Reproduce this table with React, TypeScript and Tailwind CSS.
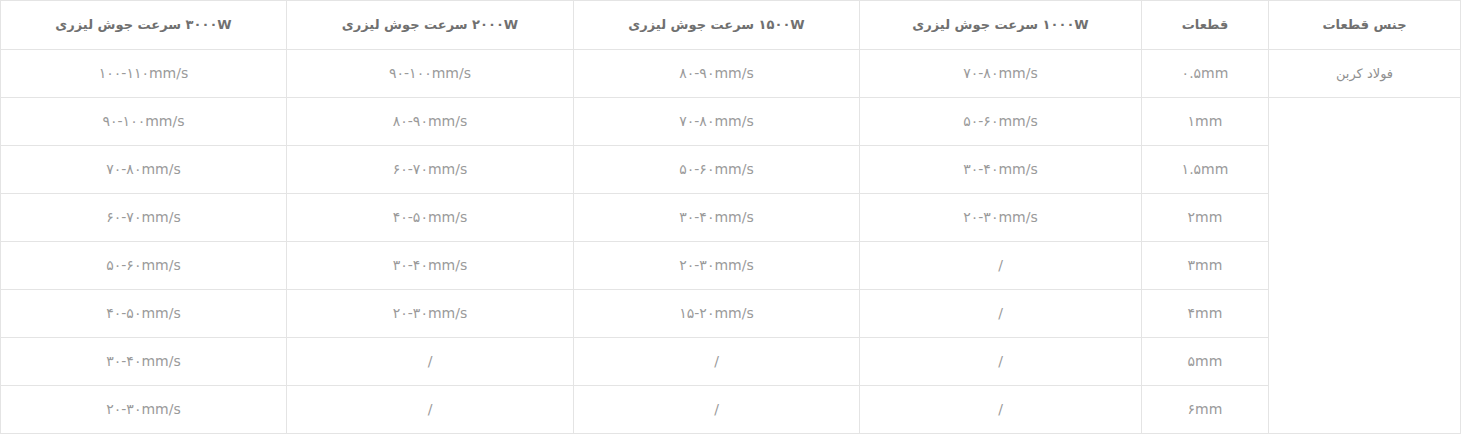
const headers = [
  "جنس قطعات",
  "قطعات",
  "۱۰۰۰W سرعت جوش لیزری",
  "۱۵۰۰W سرعت جوش لیزری",
  "۲۰۰۰W سرعت جوش لیزری",
  "۳۰۰۰W سرعت جوش لیزری",
]

const widths = ["w-[192px]", "w-[127px]", "w-[282px]", "w-[286px]", "w-[287px]", "w-[286px]"]

const rows: string[][] = [
  ["۰.۵mm", "۷۰-۸۰mm/s", "۸۰-۹۰mm/s", "۹۰-۱۰۰mm/s", "۱۰۰-۱۱۰mm/s"],
  ["۱mm", "۵۰-۶۰mm/s", "۷۰-۸۰mm/s", "۸۰-۹۰mm/s", "۹۰-۱۰۰mm/s"],
  ["۱.۵mm", "۳۰-۴۰mm/s", "۵۰-۶۰mm/s", "۶۰-۷۰mm/s", "۷۰-۸۰mm/s"],
  ["۲mm", "۲۰-۳۰mm/s", "۳۰-۴۰mm/s", "۴۰-۵۰mm/s", "۶۰-۷۰mm/s"],
  ["۳mm", "/", "۲۰-۳۰mm/s", "۳۰-۴۰mm/s", "۵۰-۶۰mm/s"],
  ["۴mm", "/", "۱۵-۲۰mm/s", "۲۰-۳۰mm/s", "۴۰-۵۰mm/s"],
  ["۵mm", "/", "/", "/", "۳۰-۴۰mm/s"],
  ["۶mm", "/", "/", "/", "۲۰-۳۰mm/s"],
]

export default function App() {
  return (
    <div className="bg-white min-h-screen">
      <table
        dir="rtl"
        className="w-[1459px] border-collapse table-fixed text-center text-[14px] font-['DejaVu_Sans','Noto_Sans',sans-serif]"
      >
        <thead>
          <tr className="h-[49px]">
            {headers.map((h, i) => (
              <th
                key={i}
                className={`${widths[i]} border border-[#e4e4e4] font-bold text-[#707070] text-[13px]`}
              >
                {h}
              </th>
            ))}
          </tr>
        </thead>
        <tbody>
          {rows.map((r, ri) => (
            <tr key={ri} className="h-[48px]">
              {ri === 0 && (
                <td className="border border-[#e4e4e4] text-[#8f8f8f] text-[13px]">فولاد کربن</td>
              )}
              {ri === 1 && <td rowSpan={7} className="border border-[#e4e4e4]" />}
              {r.map((c, ci) => (
                <td key={ci} className="border border-[#e4e4e4] text-[#9a9a9a]">
                  {c}
                </td>
              ))}
            </tr>
          ))}
        </tbody>
      </table>
    </div>
  )
}
